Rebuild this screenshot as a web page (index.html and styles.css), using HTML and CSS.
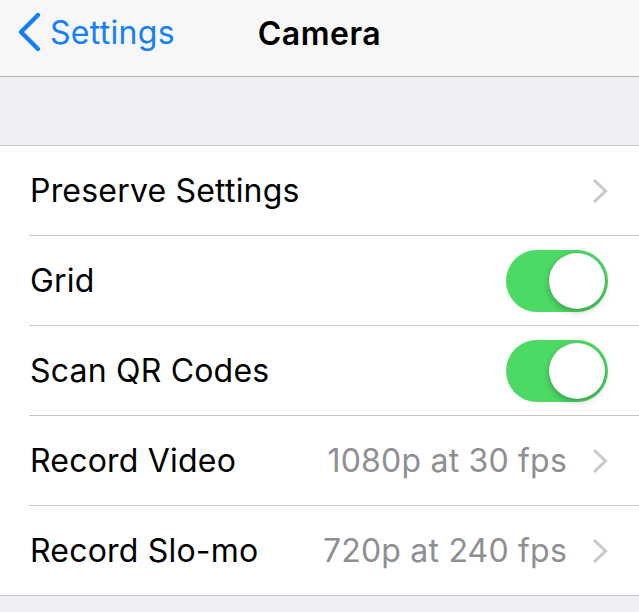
FILE: index.html
```html
<!DOCTYPE html>
<html lang="en">
  <head>
    <meta charset="UTF-8" />
    <meta name="viewport" content="width=device-width, initial-scale=1.0" />
    <title>Camera</title>
    <link rel="stylesheet" href="styles.css">
  </head>
  <body>
    <div class="nav">
      <a href="" class="back">
        <svg class="back_icon" width="26" height="42" viewBox="0 0 26 42">
          <path d="M22 4 L5 21 L22 38" fill="none" stroke="#157efb" stroke-width="4.4" stroke-linecap="round" stroke-linejoin="round" />
        </svg>
        <span>Settings</span>
      </a>
      <h1 class="title">Camera</h1>
    </div>
    <div class="spacer"></div>
    <ul class="list">
      <li class="row">
        <span class="label">Preserve Settings</span>
        <svg class="chev" width="16" height="26" viewBox="0 0 16 26"><path d="M2 2 L13.5 13 L2 24" fill="none" stroke="#c7c7cc" stroke-width="3" /></svg>
      </li>
      <li class="row">
        <span class="label">Grid</span>
        <span class="toggle on"><span class="knob"></span></span>
      </li>
      <li class="row">
        <span class="label">Scan QR Codes</span>
        <span class="toggle on"><span class="knob"></span></span>
      </li>
      <li class="row">
        <span class="label">Record Video</span>
        <span class="value">1080p at 30 fps</span>
        <svg class="chev" width="16" height="26" viewBox="0 0 16 26"><path d="M2 2 L13.5 13 L2 24" fill="none" stroke="#c7c7cc" stroke-width="3" /></svg>
      </li>
      <li class="row">
        <span class="label">Record Slo-mo</span>
        <span class="value">720p at 240 fps</span>
        <svg class="chev" width="16" height="26" viewBox="0 0 16 26"><path d="M2 2 L13.5 13 L2 24" fill="none" stroke="#c7c7cc" stroke-width="3" /></svg>
      </li>
    </ul>
  </body>
</html>
```

FILE: styles.css
```css
* {
  margin: 0;
  padding: 0;
  box-sizing: border-box;
}
html,
body {
  background: #efeff4;
  font-family: Inter, "Noto Sans", sans-serif;
  width: 639px;
  height: 612px;
  overflow: hidden;
}
li {
  list-style: none;
}
.nav {
  height: 77px;
  background: #f7f7f8;
  border-bottom: 1px solid #b2b2b6;
  display: flex;
  align-items: center;
  justify-content: center;
  position: relative;
  padding-bottom: 10px;
}
.nav .back {
  position: absolute;
  left: 16px;
  top: 11px;
  display: flex;
  align-items: center;
  gap: 8px;
  color: #157efb;
  text-decoration: none;
  font-size: 32px;
  letter-spacing: 0.3px;
}
.nav .title {
  font-size: 32px;
  font-weight: 600;
  color: #000;
  letter-spacing: 0.5px;
}
.spacer {
  height: 69px;
  border-bottom: 1px solid #c8c7cc;
}
.list {
  background: #fff;
  border-bottom: 1px solid #c8c7cc;
}
.row {
  height: 90px;
  margin-left: 29px;
  padding-right: 31px;
  display: flex;
  align-items: center;
  border-bottom: 1px solid #c8c7cc;
  font-size: 32px;
}
.row:last-child {
  border-bottom: none;
  height: 89px;
}
.row .label {
  flex: 1;
  padding-left: 1px;
  color: #000;
  letter-spacing: 0.2px;
}
.row .value {
  color: #8e8e93;
  margin-right: 25px;
  letter-spacing: 0.2px;
}
.chev {
  display: block;
}
.toggle {
  width: 102px;
  height: 62px;
  border-radius: 31px;
  background: #4cd964;
  position: relative;
}
.toggle .knob {
  position: absolute;
  right: 3px;
  top: 3px;
  width: 56px;
  height: 56px;
  border-radius: 50%;
  background: #fff;
  box-shadow: 0 3px 6px rgba(0, 0, 0, 0.25), 0 0 1px rgba(0, 0, 0, 0.2);
}
```
